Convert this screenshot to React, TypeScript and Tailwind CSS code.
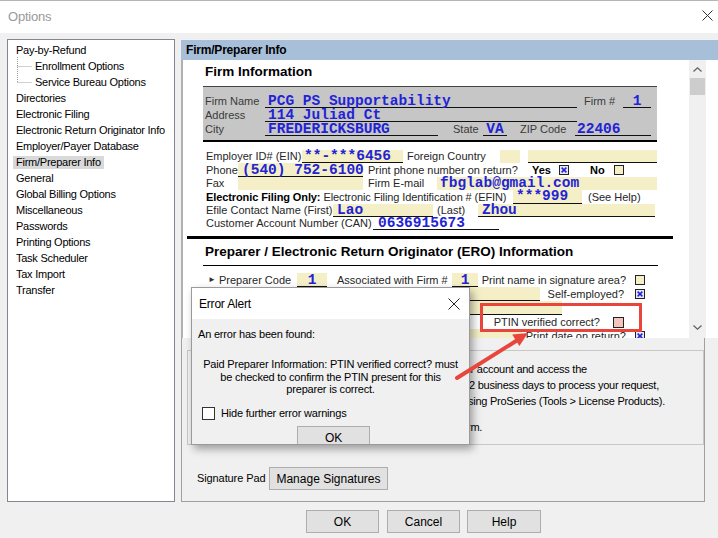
import React from "react";

const MONO = "font-['Liberation_Mono','Courier_New',monospace]";
const VAL = `${MONO} font-bold text-[#2323d6] text-[14.5px] leading-[12px]`;

function Fld({ c, children }: { c: string; children?: React.ReactNode }) {
  return (
    <span className={`flex items-center h-full border-b border-[#111] whitespace-nowrap shrink-0 ${c}`}>
      <span className={VAL}>{children}</span>
    </span>
  );
}

function Box({ x = false, c = "w-[10px] h-[10px] bg-[#f4efc6]" }: { x?: boolean; c?: string }) {
  return (
    <span className={`relative border border-[#222] shrink-0 ${c}`}>
      {x && (
        <svg className="absolute inset-0 w-full h-full" viewBox="0 0 8 8">
          <path d="M1.6 1.6L6.4 6.4M6.4 1.6L1.6 6.4" stroke="#2323d6" strokeWidth="1.5" />
        </svg>
      )}
    </span>
  );
}

function TreeItem({ label, sub = false, sel = false }: { label: string; sub?: boolean; sel?: boolean }) {
  return (
    <div className={`h-[16px] flex items-center whitespace-nowrap ${sub ? "pl-[27px]" : "pl-[8px]"}`}>
      {sel ? (
        <span className="inline-block h-[13px] leading-[13px] bg-[#d9d9d9] -ml-[3px] px-[3px]">{label}</span>
      ) : (
        <span className="leading-[16px]">{label}</span>
      )}
    </div>
  );
}

function Btn({ c, children }: { c: string; children: React.ReactNode }) {
  return (
    <div className={`flex items-center justify-center bg-[#e1e1e1] border border-[#adadad] text-[12px] text-black shrink-0 whitespace-nowrap ${c}`}>
      {children}
    </div>
  );
}

export default function App() {
  return (
    <div className="relative w-[718px] h-[538px] bg-[#f0f0f0] overflow-hidden font-['Liberation_Sans',Arial,sans-serif] text-black">
      {/* title bar */}
      <div className="h-[33px] bg-white border-t border-[#b5b5b5] flex items-center justify-between pl-[8px] pr-[5px]">
        <span className="text-[13px] text-[#999] tracking-[-0.2px]">Options</span>
        <svg width="11" height="11" viewBox="0 0 11 11" className="mb-[3px]">
          <path d="M0.5 0.5L10.5 10.5M10.5 0.5L0.5 10.5" stroke="#333" strokeWidth="1" />
        </svg>
      </div>

      <div className="flex mt-[6px]">
        {/* tree */}
        <div className="ml-[7px] w-[168px] h-[463px] border border-[#828790] bg-white pt-[2px] text-[11px] tracking-[-0.25px] text-black relative">
          <TreeItem label="Pay-by-Refund" />
          <TreeItem label="Enrollment Options" sub />
          <TreeItem label="Service Bureau Options" sub />
          <TreeItem label="Directories" />
          <TreeItem label="Electronic Filing" />
          <TreeItem label="Electronic Return Originator Info" />
          <TreeItem label="Employer/Payer Database" />
          <TreeItem label="Firm/Preparer Info" sel />
          <TreeItem label="General" />
          <TreeItem label="Global Billing Options" />
          <TreeItem label="Miscellaneous" />
          <TreeItem label="Passwords" />
          <TreeItem label="Printing Options" />
          <TreeItem label="Task Scheduler" />
          <TreeItem label="Tax Import" />
          <TreeItem label="Transfer" />
          <svg className="absolute left-[8px] top-[16px]" width="20" height="30" viewBox="0 0 20 30">
            <path d="M1.5 1V26.5M1.5 10.5H16M1.5 26.5H16" stroke="#a0a0a0" strokeWidth="1" strokeDasharray="1 1" />
          </svg>
        </div>

        {/* right panel */}
        <div className="ml-[6px] mt-[1px] w-[537px] flex flex-col">
          <div className="h-[20px] bg-[#a7bfd9] flex items-center pl-[5px] text-[12px] font-bold tracking-[-0.2px]">
            Firm/Preparer Info
          </div>
          <div className="h-[278px] flex bg-white border-l-2 border-[#b0b0b0]">
            {/* scroll content */}
            <div className="w-[506px] h-full overflow-hidden text-[11px] text-[#262626]">
              <div className="pt-[4px] pl-[22px] h-[20px] text-[13.5px] font-bold leading-[16px] text-black">Firm Information</div>
              <div className="mt-[6px] ml-[20px] w-[454px] bg-[#c6c6c6] border-t border-[#444] border-b-2 border-b-black pt-[7px] pb-[4px] pl-[2px] text-[#3a3a3a] whitespace-nowrap">
                <div className="flex items-center h-[14px]">
                  <span className="w-[60px] shrink-0">Firm Name</span>
                  <Fld c="w-[312px] pl-[3px]">PCG PS Supportability</Fld>
                  <span className="ml-[7px] w-[39px] shrink-0">Firm #</span>
                  <Fld c="w-[28px] justify-center">1</Fld>
                </div>
                <div className="flex items-center h-[14px]">
                  <span className="w-[60px] shrink-0">Address</span>
                  <Fld c="w-[312px] pl-[3px]">114 Juliad Ct</Fld>
                </div>
                <div className="flex items-center h-[14px]">
                  <span className="w-[60px] shrink-0">City</span>
                  <Fld c="w-[173px] pl-[3px]">FREDERICKSBURG</Fld>
                  <span className="ml-[15px] w-[30px] shrink-0">State</span>
                  <Fld c="w-[24px] justify-center">VA</Fld>
                  <span className="ml-[13px] w-[55px] shrink-0">ZIP Code</span>
                  <Fld c="w-[76px] pl-[2px]">22406</Fld>
                </div>
              </div>

              <div className="mt-[8px] pl-[23px] whitespace-nowrap">
                <div className="flex items-center h-[13.4px]">
                  <span className="w-[96px] shrink-0">Employer ID# (EIN)</span>
                  <Fld c="w-[101px] pl-[2px] bg-[#f4efc6]">**-***6456</Fld>
                  <span className="ml-[4px] w-[93px] shrink-0">Foreign Country</span>
                  <span className="w-[20px] h-full bg-[#f4efc6] shrink-0" />
                  <Fld c="ml-[8px] w-[129px] bg-[#f4efc6]"></Fld>
                </div>
                <div className="flex items-center h-[13.4px]">
                  <span className="w-[32px] shrink-0">Phone</span>
                  <Fld c="w-[125px] pl-[4px] bg-[#f4efc6]">(540) 752-6100</Fld>
                  <span className="ml-[5px] w-[164px] shrink-0">Print phone number on return?</span>
                  <span className="w-[27px] font-bold text-black shrink-0">Yes</span>
                  <Box x c="w-[10px] h-[10px] bg-[#e6e8f8]" />
                  <span className="ml-[21px] w-[24px] font-bold text-black shrink-0">No</span>
                  <Box />
                </div>
                <div className="flex items-center h-[13.4px]">
                  <span className="w-[32px] shrink-0">Fax</span>
                  <span className="w-[125px] h-full bg-[#f4efc6] shrink-0" />
                  <span className="ml-[5px] w-[69px] shrink-0">Firm E-mail</span>
                  <Fld c="w-[220px] pl-[3px] bg-[#f4efc6] border-b-0">fbglab@gmail.com</Fld>
                </div>
                <div className="flex items-center h-[13.4px]">
                  <span className="w-[307px] shrink-0 tracking-[-0.1px]">
                    <span className="font-bold text-black">Electronic Filing Only:</span> Electronic Filing Identification # (EFIN)
                  </span>
                  <Fld c="w-[69px] pl-[3px] bg-[#f4efc6]">***999</Fld>
                  <span className="ml-[6px] shrink-0">(See Help)</span>
                </div>
                <div className="flex items-center h-[13.4px]">
                  <span className="w-[127px] shrink-0">Efile Contact Name (First)</span>
                  <Fld c="w-[100px] pl-[4px] bg-[#f4efc6]">Lao</Fld>
                  <span className="ml-[4px] w-[41px] shrink-0">(Last)</span>
                  <Fld c="w-[177px] pl-[4px] bg-[#f4efc6]">Zhou</Fld>
                </div>
                <div className="flex items-center h-[13.4px]">
                  <span className="w-[167px] shrink-0">Customer Account Number (CAN)</span>
                  <Fld c="w-[126px] pl-[5px]">0636915673</Fld>
                </div>
              </div>

              <div className="mt-[6px] ml-[4px] w-[486px] h-[3px] bg-black" />
              <div className="mt-[5px] pl-[22px] h-[16px] text-[13.5px] font-bold leading-[16px] text-black whitespace-nowrap">
                Preparer / Electronic Return Originator (ERO) Information
              </div>
              <div className="mt-[5px] ml-[20px] w-[455px] h-[1px] bg-black" />

              <div className="mt-[7px] ml-[20px] w-[455px] whitespace-nowrap">
                <div className="flex items-center h-[14px] pl-[5px] pr-[13px]">
                  <span className="w-[11px] text-[8px] text-[#333] shrink-0">►</span>
                  <span className="w-[78px] shrink-0">Preparer Code</span>
                  <Fld c="w-[30px] justify-center bg-[#f4efc6]">1</Fld>
                  <span className="ml-[10px] w-[115px] shrink-0">Associated with Firm #</span>
                  <Fld c="w-[26px] justify-center bg-[#f4efc6]">1</Fld>
                  <span className="ml-auto">Print name in signature area?</span>
                  <Box c="ml-[9px] w-[10px] h-[10px] bg-[#f4efc6]" />
                </div>
                <div className="flex items-center h-[14px] pl-[5px] pr-[13px]">
                  <span className="w-[89px] shrink-0" />
                  <Fld c="w-[243px] bg-[#f4efc6]"></Fld>
                  <span className="ml-auto">Self-employed?</span>
                  <Box x c="ml-[11px] w-[10px] h-[10px] bg-[#e6e8f8]" />
                </div>
                <div className="flex items-center h-[14px] pl-[5px] pr-[13px]">
                  <span className="w-[89px] shrink-0" />
                  <Fld c="w-[265px] bg-[#f4efc6]"></Fld>
                </div>
                <div className="flex items-center h-[14px] pl-[5px] pr-[34px]">
                  <span className="w-[89px] shrink-0" />
                  <Fld c="w-[150px] bg-[#f4efc6]"></Fld>
                  <span className="ml-auto">PTIN verified correct?</span>
                  <Box c="ml-[13px] w-[11px] h-[11px] bg-[#f2c6bd]" />
                </div>
                <div className="flex items-center h-[14px] pl-[5px] pr-[13px]">
                  <span className="w-[89px] shrink-0" />
                  <Fld c="w-[225px] bg-[#f4efc6]"></Fld>
                  <span className="ml-auto">Print date on return?</span>
                  <Box x c="ml-[9px] w-[10px] h-[10px] bg-[#e6e8f8]" />
                </div>
              </div>
            </div>
            {/* scrollbar */}
            <div className="w-[17px] h-full bg-[#f0f0f0] flex flex-col items-center pt-[7px] pb-[8px]">
              <svg width="9" height="5" viewBox="0 0 9 5">
                <path d="M0.5 4.5L4.5 0.8L8.5 4.5" stroke="#606060" fill="none" strokeWidth="1.2" />
              </svg>
              <div className="mt-[6px] w-[15px] h-[17px] bg-[#cdcdcd]" />
              <div className="flex-1" />
              <svg width="9" height="5" viewBox="0 0 9 5">
                <path d="M0.5 0.5L4.5 4.2L8.5 0.5" stroke="#606060" fill="none" strokeWidth="1.2" />
              </svg>
            </div>
            <div className="flex-1 bg-white" />
          </div>

          {/* lower section */}
          <div className="h-[164px] w-[524px] border-l border-r border-b border-[#a0a0a0] flex flex-col">
            <div className="mt-[12px] ml-[5px] w-[517px] h-[95px] border border-[#c8c8c8] pl-[11px] pt-[10px] text-[11px] text-black tracking-[-0.25px]">
              <div className="h-[16px] leading-[16px] whitespace-nowrap">
                <span className="inline-block w-[275px] text-right overflow-hidden align-bottom">your</span> account and access the
              </div>
              <div className="h-[16px] leading-[16px] whitespace-nowrap">
                <span className="inline-block w-[270px] text-right overflow-hidden align-bottom">1-</span>2 business days to process your request,
              </div>
              <div className="h-[16px] leading-[16px] whitespace-nowrap">
                <span className="inline-block w-[269px] text-right overflow-hidden align-bottom">u</span>sing ProSeries (Tools &gt; License Products).
              </div>
              <div className="mt-[10px] h-[16px] leading-[16px] whitespace-nowrap">
                <span className="inline-block w-[268px] text-right overflow-hidden align-bottom">fo</span>rm.
              </div>
            </div>
            <div className="mt-[22px] flex items-center h-[23px] pl-[15px]">
              <span className="w-[72px] text-[11px] tracking-[-0.1px] whitespace-nowrap">Signature Pad</span>
              <Btn c="w-[119px] h-[23px]">Manage Signatures</Btn>
            </div>
          </div>
        </div>
      </div>

      {/* bottom buttons */}
      <div className="mt-[8px] flex h-[23px]">
        <Btn c="ml-[306px] w-[73px] h-[23px]">OK</Btn>
        <Btn c="ml-[8px] w-[73px] h-[23px]">Cancel</Btn>
        <Btn c="ml-[7px] w-[74px] h-[23px]">Help</Btn>
      </div>

      {/* Error Alert dialog */}
      <div className="absolute left-[191px] top-[287px] w-[279px] h-[158px] bg-[#f0f0f0] border border-[#9a9a9a] shadow-[3px_4px_8px_rgba(0,0,0,0.35)] overflow-hidden">
        <div className="h-[31px] bg-white flex items-center justify-between pl-[7px] pr-[9px]">
          <span className="text-[12px] tracking-[-0.2px]">Error Alert</span>
          <svg width="12" height="12" viewBox="0 0 12 12">
            <path d="M0.5 0.5L11.5 11.5M11.5 0.5L0.5 11.5" stroke="#222" strokeWidth="1" />
          </svg>
        </div>
        <div className="pl-[6px] pt-[8px] text-[11px] tracking-[-0.2px]">
          <div className="leading-[14px]">An error has been found:</div>
          <div className="mt-[17px] text-center leading-[12.5px] pr-[6px] whitespace-nowrap">
            Paid Preparer Information: PTIN verified correct? must
            <br />
            be checked to confirm the PTIN present for this
            <br />
            preparer is correct.
          </div>
          <div className="mt-[11px] flex items-center h-[13px]">
            <span className="ml-[4px] w-[13px] h-[13px] border border-[#333] bg-white shrink-0" />
            <span className="ml-[6px]">Hide further error warnings</span>
          </div>
          <Btn c="mt-[6px] ml-[99px] w-[73px] h-[24px] text-[12px]">OK</Btn>
        </div>
      </div>

      {/* red annotation */}
      <svg className="absolute left-0 top-0 pointer-events-none" width="718" height="538" viewBox="0 0 718 538">
        <rect x="481.5" y="304.5" width="159" height="26" fill="none" stroke="#e8453c" strokeWidth="3" />
        <line x1="457" y1="378" x2="516" y2="341" stroke="#e8453c" strokeWidth="4" strokeLinecap="round" />
        <polygon points="528,333 519.4,346 512.2,334.5" fill="#e8453c" />
      </svg>
    </div>
  );
}
